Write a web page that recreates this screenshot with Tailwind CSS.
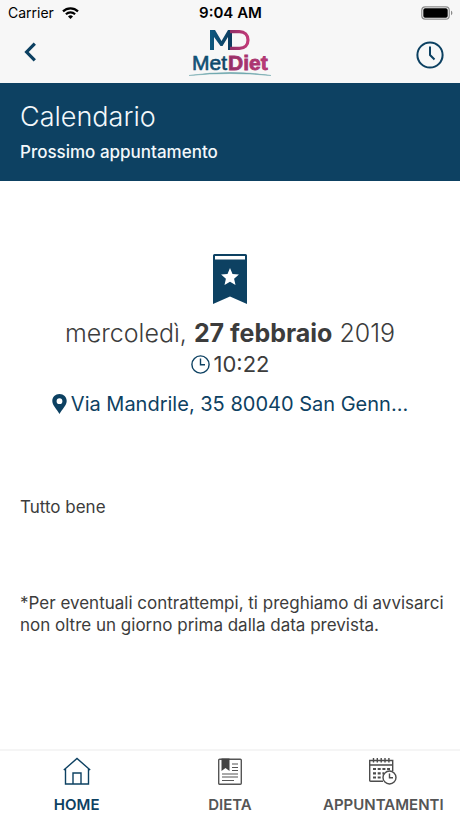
<!DOCTYPE html>
<html lang="it">
<head>
    <meta charset="UTF-8">
    <meta name="viewport" content="width=device-width, initial-scale=1.0">
    <title>MetDiet - Calendario</title>
    <script src="https://cdn.jsdelivr.net/npm/@tailwindcss/browser@4"></script>
</head>
<body class="flex flex-col min-h-screen bg-white text-[#3c3c3c] font-['Inter',sans-serif]">
    <header class="bg-[#f7f7f7]">
        <!-- Status bar -->
        <div class="grid grid-cols-3 items-center h-[26px] pl-2 pr-[7px] text-sm text-black">
            <div class="flex items-center gap-2">
                <span>Carrier</span>
                <svg class="w-[17px] h-3" viewBox="0 0 17 12" fill="none" stroke="#000" stroke-width="2.2">
                    <path d="M1 4.4a10.8 10.8 0 0 1 15 0" />
                    <path d="M3.9 7.2a6.8 6.8 0 0 1 9.2 0" />
                    <path d="M8.5 12 6 9.4a3.6 3.6 0 0 1 5 0z" fill="#000" stroke="none" />
                </svg>
            </div>
            <span class="text-center text-[15px] font-semibold">9:04 AM</span>
            <svg class="justify-self-end w-8 h-[14px]" viewBox="0 0 32 14">
                <rect x="0.8" y="0.8" width="27.4" height="12.4" rx="3.4" fill="#fff" stroke="#8a8a8a" stroke-width="1.2" />
                <rect x="2.3" y="2.3" width="24.4" height="9.4" rx="1.8" fill="#000" />
                <path d="M30 4.8c1.8.6 1.8 3.8 0 4.4z" fill="#8a8a8a" />
            </svg>
        </div>

        <!-- Navigation -->
        <nav class="grid grid-cols-3 items-center h-[57px] px-4">
            <button type="button" aria-label="Indietro" class="justify-self-start px-2 pb-1.5">
                <svg class="w-3 h-5" viewBox="0 0 12 20" fill="none" stroke="#0c4061" stroke-width="3.2">
                    <path d="M10.8 1.6 2.6 10l8.200 8.400" />
                </svg>
            </button>
            <svg class="justify-self-center w-[84px] h-[50px]" viewBox="0 0 84 50" role="img" aria-label="MetDiet">
                <defs>
                    <linearGradient id="blue" x1="0" x2="1">
                        <stop offset="0" stop-color="#0e5a80" />
                        <stop offset="1" stop-color="#0c3b5e" />
                    </linearGradient>
                    <linearGradient id="pink" x1="0" x2="1">
                        <stop offset="0" stop-color="#8e2f66" />
                        <stop offset="1" stop-color="#c23a78" />
                    </linearGradient>
                </defs>
                <path d="M22 20V0h5l6.500 11L40 0h4v20h-4V7l-5.500 9h-2L26 7v13z" fill="url(#blue)" />
                <path d="M42 1.600h9.500c5 0 8.500 3.300 8.500 8.400s-3.500 8.400-8.500 8.400H42" fill="none" stroke="url(#pink)" stroke-width="3.200" />
                <text x="4" y="40" font-family="Liberation Sans, sans-serif" font-size="21" fill="url(#blue)" stroke="#0d4a6e" stroke-width="0.6">Met</text>
                <text x="40" y="40" font-family="Liberation Sans, sans-serif" font-size="21" font-weight="700" fill="url(#pink)" stroke="#a83570" stroke-width="0.8">Diet</text>
                <path d="M1 45.500Q42 39.500 83 45.500Q42 41.500 1 45.500z" fill="#3b8a94" stroke="#7fb0b5" stroke-width="0.600" />
            </svg>
            <button type="button" aria-label="Orario" class="justify-self-end">
                <svg class="w-7 h-7" viewBox="0 0 28 28" fill="none" stroke="#0c4061" stroke-width="2">
                    <circle cx="14" cy="14" r="12.600" />
                    <path d="M14 5.500V14l4.500 4.500" stroke-linejoin="round" />
                </svg>
            </button>
        </nav>
    </header>

    <section class="h-[98px] px-5 pt-[17px] bg-[#0d4162] text-[#f3f8fb]">
        <h1 class="text-[27px] leading-[34px] font-light">Calendario</h1>
        <h2 class="mt-2 text-[17px] leading-5 font-medium">Prossimo appuntamento</h2>
    </section>

    <main class="flex-1 pt-[73px]">
        <div class="flex flex-col items-center px-5">
            <svg class="w-[34px] h-[50px]" viewBox="0 0 34 50">
                <path d="M1.500 0h31Q34 0 34 1.500V50L17 42.500 0 50V1.500Q0 0 1.500 0zM2 2v3.500h30V2z" fill="#0d4162" fill-rule="evenodd" />
                <path d="m17 14 2.500 5.900 6.400.6-4.800 4.200 1.400 6.300-5.500-3.300-5.500 3.300 1.400-6.300-4.800-4.200 6.400-.6z" fill="#fff" />
            </svg>
            <p class="mt-[14px] text-[25px] leading-[30px] font-light whitespace-nowrap">mercoledì, <b class="font-bold">27 febbraio</b> 2019</p>
            <p class="flex items-center gap-1 text-[22px] leading-8">
                <svg class="w-[19px] h-[19px]" viewBox="0 0 19 19" fill="none" stroke="#0d4162" stroke-width="1.400">
                    <circle cx="9.500" cy="9.500" r="8.600" />
                    <path d="M9.500 3.500v6.200H14" />
                </svg>
                <span>10:22</span>
            </p>
            <a href="#" class="flex items-center gap-1 mt-2 text-[20px] leading-8 text-[#0d4162] whitespace-nowrap">
                <svg class="w-[15px] h-5" viewBox="0 0 15 20" fill="#0d4162">
                    <path d="M7.500 0C3.300 0 .3 3 .3 7c0 4.200 4.600 8.300 7.200 13 2.600-4.700 7.200-8.800 7.200-13 0-4-3-7-7.200-7zm0 4.300a2.900 2.900 0 1 1 0 5.800 2.900 2.900 0 0 1 0-5.800z" fill-rule="evenodd" />
                </svg>
                <span>Via Mandrile, 35 80040 San Genn...</span>
            </a>
        </div>

        <div class="pl-5 pr-3 pt-[76px] text-[17px] leading-[22px]">
            <p>Tutto bene</p>
            <p class="mt-[74px]">*Per eventuali contrattempi, ti preghiamo di avvisarci non oltre un giorno prima dalla data prevista.</p>
        </div>
    </main>

    <footer class="border-t-2 border-[#f5f5f5]">
        <nav class="grid grid-cols-3 h-[67px] pt-1 text-[15px] leading-5 font-semibold text-[#555]">
            <a href="#" class="flex flex-col items-center gap-2 text-[#0d4162]">
                <svg class="w-7 h-8" viewBox="0 0 28 32" fill="none" stroke="#0d4162" stroke-width="1.400">
                    <path d="M.8 15 14 3.500 27.200 15M2.500 13.500V29h23V13.500M10 29V18h8v11" />
                </svg>
                <span>HOME</span>
            </a>
            <a href="#" class="flex flex-col items-center gap-2">
                <svg class="w-7 h-8" viewBox="0 0 28 32" fill="none" stroke="#555" stroke-width="1.400">
                    <rect x="2.700" y="4.200" width="22.600" height="25" rx="1" />
                    <path d="M5.500 3.500h8V16l-4-3-4 3z" fill="#444" stroke="none" />
                    <path d="M16 9h6M16 12.500h6M16 15.500h6M6 19h16M6 22h16M6 25.500h12" stroke-width="1.200" />
                </svg>
                <span>DIETA</span>
            </a>
            <a href="#" class="flex flex-col items-center gap-2">
                <svg class="w-7 h-8" viewBox="0 0 28 32" fill="none" stroke="#4c4c4c" stroke-width="1.400">
                    <path d="M14 26.300H1.700Q.7 26.300.7 25.300V5.500h23v10.500M.7 10h23" />
                    <path d="M4.500 3v4.500M8.300 3v4.500M12.200 3v4.500M16 3v4.500M19.900 3v4.500" />
                    <path d="M4 14h17M4 18.300h11M4 22.500h9" stroke-width="2.200" stroke-dasharray="3 1.700" />
                    <circle cx="20.500" cy="22.500" r="6.500" fill="#fff" />
                    <path d="M20.500 18.500v4.300H24" />
                </svg>
                <span>APPUNTAMENTI</span>
            </a>
        </nav>
    </footer>
</body>
</html>
